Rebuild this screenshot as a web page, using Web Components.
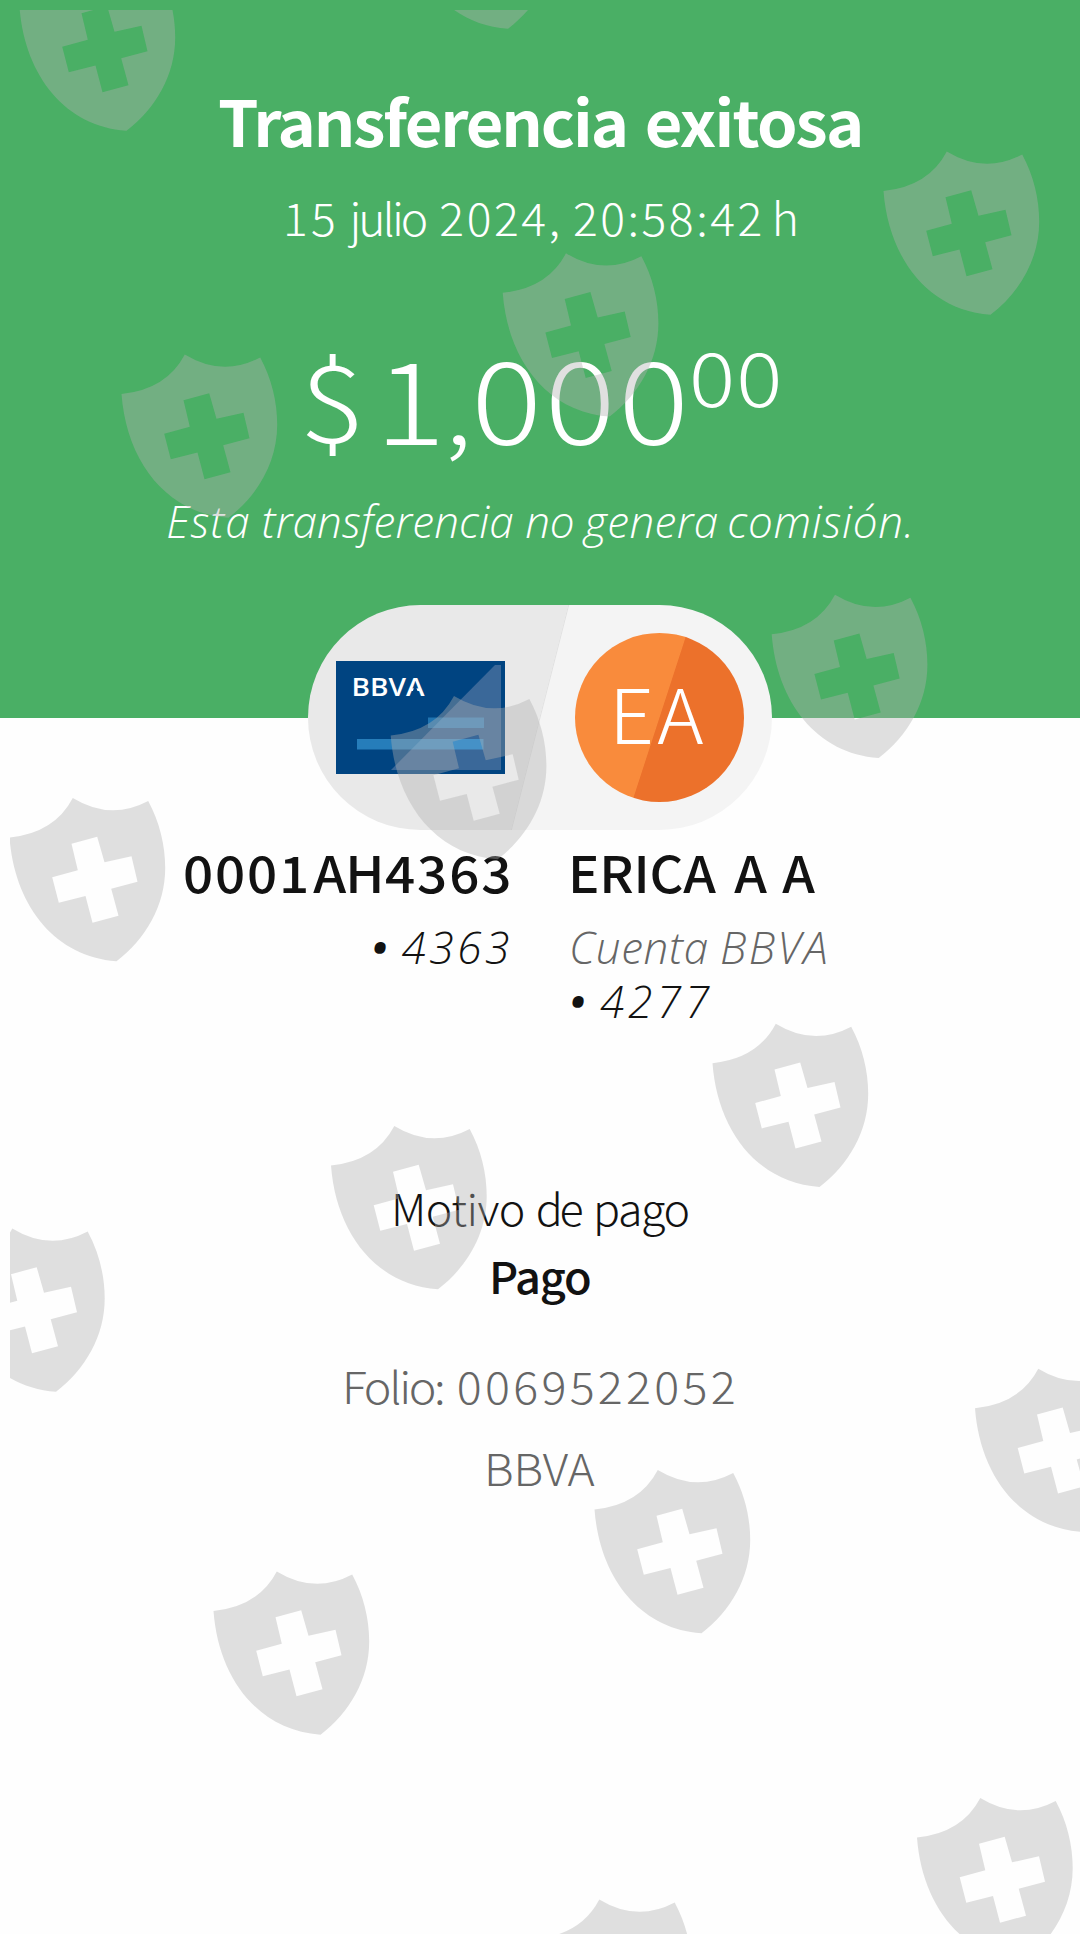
<!DOCTYPE html>
<html lang="es">
<head>
<meta charset="utf-8">
<title>Transferencia exitosa</title>
<style>
html,body{margin:0;padding:0;background:#fefefe}
</style>
</head>
<body>
<transfer-receipt></transfer-receipt>
<script>
const FACES = {
  grot: '"Noto Sans CJK SC","Open Sans",sans-serif',
  open: '"Open Sans","Noto Sans",sans-serif'
};
const pen = document.createElement('canvas').getContext('2d');

/* One line of type. `runs` lists each word as "start,end[,length[,weight[,size[,raise]]]]"
   in px; every word is tracked so that its ink fills that span. `base` is the baseline
   measured from the top of the line box, `stretch` the horizontal glyph scale. */
class FitText extends HTMLElement {
  connectedCallback() {
    const num = (name, fallback) => +(this.getAttribute(name) || fallback);
    const size = num('size'), line = num('line'), base = num('base'), sx = num('stretch', 1);
    const baseWeight = this.getAttribute('weight') || '300';
    const style = this.hasAttribute('italic') ? 'italic' : 'normal';
    const family = FACES[this.getAttribute('face') || (style === 'italic' ? 'open' : 'grot')];
    const text = this.textContent;
    const runs = this.getAttribute('runs').split(' ').map(r => r.split(',').map(Number));
    const origin = runs[0][0];
    const width = runs[runs.length - 1][1] - origin;
    pen.font = `${style} ${baseWeight} ${size}px ${family}`;
    const box = pen.measureText(text);
    const shift = base - (line / 2 + (box.fontBoundingBoxAscent - box.fontBoundingBoxDescent) / 2);
    let at = 0, x = 0, html = '', first = 0;
    runs.forEach(([x0, x1, len, weight, runSize, raise], i) => {
      const w = weight || baseWeight, s = runSize || size;
      let spaces = 0;
      while (text[at] === ' ') { at++; spaces++; }
      let end = at;
      if (len) end = at + len; else while (end < text.length && text[end] !== ' ') end++;
      const word = text.slice(at, end), n = word.length;
      at = end;
      pen.font = `${style} ${w} ${s}px ${family}`;
      const m = pen.measureText(word);
      const ink = m.actualBoundingBoxRight + m.actualBoundingBoxLeft;
      const track = n > 1 ? ((x1 - x0) / sx - ink) / (n - 1) : 0;
      const start = (x0 - origin) / sx + m.actualBoundingBoxLeft;
      if (i === 0) { first = start; x = start; }
      if (spaces) {
        pen.font = `${style} ${baseWeight} ${size}px ${family}`;
        const gap = start - x - pen.measureText(' ').width;
        html += `<span style="letter-spacing:${gap}px"> </span>`;
        x = start;
      }
      const lead = start - x;
      const own = s !== size ? `;font-size:${s}px;line-height:0;vertical-align:${raise || 0}px` : '';
      html += `<span style="letter-spacing:${track}px;font-weight:${w};margin-left:${lead}px${own}">${word}</span>`;
      x = start + m.width + n * track;
    });
    this.attachShadow({ mode: 'open' }).innerHTML = `<style>
      :host{display:block;flex:none;width:${width}px;height:${line}px;white-space:pre}
      div{margin-left:${first * sx}px;width:max-content;font:${style} ${baseWeight} ${size}px/${line}px ${family};
        transform-origin:0 0;transform:translateY(${shift}px) scaleX(${sx})}
    </style><div>${html}</div>`;
    this.textContent = '';
  }
}

class BankCard extends HTMLElement {
  connectedCallback() {
    this.attachShadow({ mode: 'open' }).innerHTML = `<style>
      :host{display:block;width:169px;height:113px}
      svg{display:block}
      text{font:600 25px "Open Sans",sans-serif;fill:#fff}
    </style>
    <svg width="169" height="113" viewBox="0 0 169 113">
      <rect width="169" height="113" fill="#004481"/>
      <path d="M159 4H165V109H55Z" fill="#3a6899"/>
      <rect x="92" y="56.5" width="56" height="10.5" fill="rgba(85,195,255,.38)"/>
      <rect x="21" y="78" width="126.500" height="10.500" fill="rgba(85,195,255,.45)"/>
      <text x="15.500" y="35" textLength="73" lengthAdjust="spacingAndGlyphs">BBVA</text>
      <path d="M78.300 26H80L82.600 33H75.700Z" fill="#004481"/>
    </svg>`;
  }
}

class InitialsAvatar extends HTMLElement {
  connectedCallback() {
    this.attachShadow({ mode: 'open' }).innerHTML = `<style>
      :host{display:flex;align-items:center;justify-content:center;width:169px;height:169px;
        border-radius:50%;color:#fff;
        background:linear-gradient(108deg,#f98b3c 49.800%,#ec712b 50.200%)}
    </style><slot></slot>`;
  }
}

/* Pill that joins the origin card with the destination avatar. */
class TransferPill extends HTMLElement {
  connectedCallback() {
    this.attachShadow({ mode: 'open' }).innerHTML = `<style>
      :host{display:flex;align-items:center;justify-content:space-between;box-sizing:border-box;
        width:464px;height:225px;padding:0 28px;border-radius:112.500px;overflow:hidden;
        background:linear-gradient(104.300deg,#e9e9e9 calc(50% - .5px),#e1e1e1 50%,#f4f4f4 calc(50% + 1px))}
    </style><slot></slot>`;
  }
}

class SecurityWatermark extends HTMLElement {
  connectedCallback() {
    const spots = [[401,-134.500],[19.500,-32.500],[883.500,151.500],[502.700,253.300],[121.500,354.500],[771.700,594.700],
      [390.700,696],[9.500,798],[712.500,1023.700],[331,1126],[-51,1228.500],[975,1368.700],
      [594.500,1470],[213.500,1571.500],[917,1798],[536,1899.500]];
    this.attachShadow({ mode: 'open' }).innerHTML = `<style>
      :host{display:block;position:absolute;left:10px;top:10px;right:0;bottom:0;overflow:hidden;pointer-events:none}
      svg{display:block}
    </style>
    <svg width="1070" height="1924" viewBox="10 10 1070 1924" fill="rgba(176,176,176,.394)">
      <defs><path id="shield" fill-rule="evenodd" d="M0 39.500Q45 35 63.300 0Q101 23 138.700 3C150 24 155.700 47 155.700 70C155.700 108 136 141 107 163.300C45 159 5 107 0 39.500Z
        M62 45.700L87.700 38.700L95 64.300L122 58.300L128 83.700L101.700 90.700L109 117.700L83 124.700L76 98L49.300 104.700L42.700 79.300L68.300 72.300Z"/></defs>
      ${spots.map(([x, y]) => `<use href="#shield" x="${x}" y="${y}"/>`).join('')}
    </svg>`;
  }
}

class TransferReceipt extends HTMLElement {
  connectedCallback() {
    this.attachShadow({ mode: 'open' }).innerHTML = `<style>
      :host{display:flex;flex-direction:column;align-items:center;position:relative;
        width:1080px;height:1934px;overflow:hidden;background:#fefefe;color:#121212}
      header{display:flex;flex-direction:column;align-items:center;box-sizing:border-box;
        width:100%;height:718px;padding-top:76px;background:#4aaf65;color:#fff;flex:none}
      .date{margin-top:22px}
      .amount{display:flex;gap:10px;margin-top:86px;padding-left:4px}
      .fee{margin-top:26px;margin-right:3px}
      transfer-pill{margin-top:-113px;flex:none}
      .parties{display:flex;gap:63px;width:100%;margin-top:13px}
      .from,.to{display:flex;flex-direction:column}
      .from{width:509px;align-items:flex-end}
      .sub{margin-top:16px}
      .gray{color:#666}
      .reason{margin-top:151px}
      .value{margin-top:8px}
      .folio{margin-top:51px}
      .bank{margin-top:22px}
      .bank,.value,.date,.reason{margin-left:3px}
    </style>
    <header>
      <fit-text size="63" line="90" base="71.200" stretch="1.03" weight="700" runs="219,624.6 646.8,860">Transferencia exitosa</fit-text>
      <fit-text class="date" size="44.500" line="60" base="48.500" stretch="1.04" runs="286.8,333.6 347,425.4 440,557.5 573.6,760 775.4,796">15 julio 2024, 20:58:42 h</fit-text>
      <div class="amount"><fit-text size="115" line="130" base="110.500" stretch="1.15" runs="305.7,363,1,300,107,2 386,428.7,1 450,463,1,300,96 478,682.3,3">$1,000</fit-text><fit-text size="75" line="86" base="73" stretch="1.15" runs="692,778.3">00</fit-text></div>
      <fit-text class="fee" italic size="44" line="60" base="47.500" weight="340" runs="167.7,248.7 263,512.7 525.7,572.3 581.7,717.3 728.7,908.3">Esta transferencia no genera comisión.</fit-text>
    </header>
    <transfer-pill>
      <bank-card></bank-card>
      <initials-avatar><fit-text size="75" line="90" base="71.500" stretch="1.05" runs="617,656,1 658,703,1">EA</fit-text></initials-avatar>
    </transfer-pill>
    <div class="parties">
      <div class="from">
        <fit-text size="50" line="60" base="50.300" weight="500" stretch="1.06" runs="185,306.5,4 313,380,2 386,508.6,4">0001AH4363</fit-text>
        <fit-text class="sub" italic size="44" line="54" base="44.500" weight="340" runs="373.500,384,1,800,34,2.5 401,508.6">• 4363</fit-text>
      </div>
      <div class="to">
        <fit-text size="50" line="60" base="50.300" weight="500" stretch="1.05" runs="572,716.7 734,765 782,813.3">ERICA A A</fit-text>
        <fit-text class="sub gray" italic size="44" line="54" base="44.500" weight="340" runs="570,705.7 720,824.3">Cuenta BBVA</fit-text>
        <fit-text italic size="44" line="54" base="44.500" weight="340" runs="570,580.500,1,800,34,2.5 598,708">• 4277</fit-text>
      </div>
    </div>
    <fit-text class="reason" size="43.500" line="60" base="48" stretch="1.03" runs="394.3,522.7 537,581.3 596.3,687.3">Motivo de pago</fit-text>
    <fit-text class="value" size="43" line="60" base="48.300" stretch="1.05" weight="500" runs="492,589">Pago</fit-text>
    <fit-text class="folio gray" size="44" line="60" base="47.300" stretch="1.06" runs="346,442.3 458.7,733.7">Folio: 0069522052</fit-text>
    <fit-text class="bank gray" size="44" line="60" base="47.300" stretch="1.05" runs="488.5,595">BBVA</fit-text>
    <security-watermark></security-watermark>`;
  }
}

customElements.define('fit-text', FitText);
customElements.define('bank-card', BankCard);
customElements.define('initials-avatar', InitialsAvatar);
customElements.define('transfer-pill', TransferPill);
customElements.define('security-watermark', SecurityWatermark);
customElements.define('transfer-receipt', TransferReceipt);
</script>
</body>
</html>
